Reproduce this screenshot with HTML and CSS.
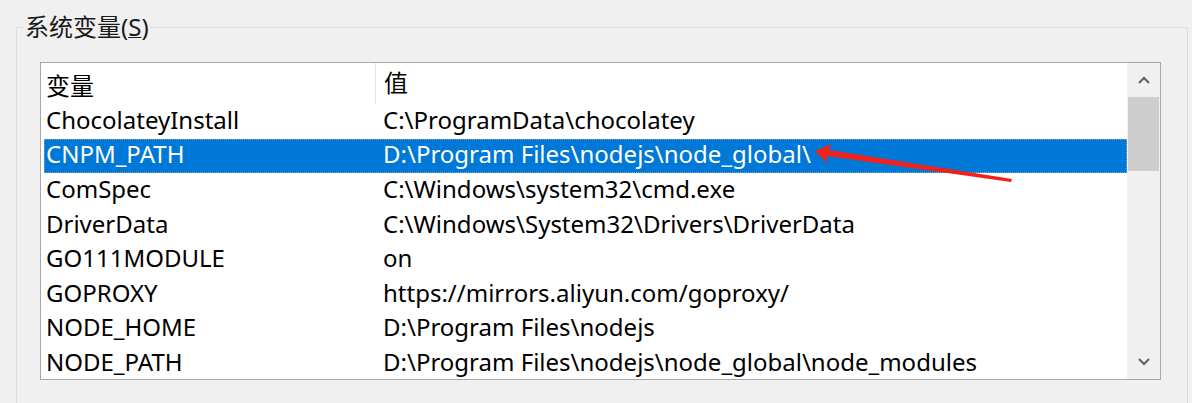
FILE: index.html
```html
<!DOCTYPE html>
<html lang="zh-CN">
<head>
    <meta charset="UTF-8">
    <title>系统变量</title>
    <link rel="stylesheet" href="styles.css">
</head>
<body>

<fieldset class="group">
    <legend>系统变量(<u>S</u>)</legend>
    <div class="listbox">
        <div class="list">
            <div class="row header">
                <div class="name">变量</div>
                <div class="value">值</div>
            </div>
            <div class="row"><div class="name">ChocolateyInstall</div><div class="value">C:\ProgramData\chocolatey</div></div>
            <div class="row selected"><div class="name">CNPM_PATH</div><div class="value">D:\Program Files\nodejs\node_global\</div></div>
            <div class="row"><div class="name">ComSpec</div><div class="value">C:\Windows\system32\cmd.exe</div></div>
            <div class="row"><div class="name">DriverData</div><div class="value">C:\Windows\System32\Drivers\DriverData</div></div>
            <div class="row"><div class="name">GO111MODULE</div><div class="value">on</div></div>
            <div class="row"><div class="name">GOPROXY</div><div class="value">https://mirrors.aliyun.com/goproxy/</div></div>
            <div class="row"><div class="name">NODE_HOME</div><div class="value">D:\Program Files\nodejs</div></div>
            <div class="row"><div class="name">NODE_PATH</div><div class="value">D:\Program Files\nodejs\node_global\node_modules</div></div>
        </div>
        <div class="scrollbar">
            <div class="arrow">
                <svg width="12" height="8" viewBox="0 0 12 8"><path d="M1 7 L6 2 L11 7" fill="none" stroke="#606060" stroke-width="2"/></svg>
            </div>
            <div class="thumb"></div>
            <div class="track"></div>
            <div class="arrow">
                <svg width="12" height="8" viewBox="0 0 12 8"><path d="M1 1 L6 6 L11 1" fill="none" stroke="#606060" stroke-width="2"/></svg>
            </div>
        </div>
    </div>
</fieldset>

<svg class="marker" width="1192" height="403" viewBox="0 0 1192 403">
    <polygon points="815,151 831,144 829,150 1012,179 1011,182 827,156 827,163" fill="#f0211a"/>
</svg>

</body>
</html>
```

FILE: styles.css
```css
body {
    margin: 0;
    background-color: #f0f0f0;
    font-family: "Noto Sans", "Noto Sans CJK SC", sans-serif;
    font-size: 24px;
    color: #000;
    height: 403px;
    overflow: hidden;
}

.group {
    box-sizing: border-box;
    margin: 14px 0 0 16px;
    width: 1172px;
    height: 389px;
    padding: 0 0 0 23px;
    border: 1px solid #dcdcdc;
    border-bottom: none;
}

.group legend {
    margin-left: -16px;
    padding: 0 1px;
    font-size: 24px;
    line-height: 26px;
    color: #1a1a1a;
}

.group legend u {
    text-decoration-thickness: 1px;
}

.listbox {
    display: flex;
    margin-top: 22px;
    width: 1119px;
    height: 316px;
    border: 1px solid #a8a8a8;
    background-color: #fff;
}

.list {
    flex: 1;
    padding-left: 3px;
    overflow: hidden;
}

.row {
    display: flex;
    height: 34.6px;
    padding-bottom: 4px;
    align-items: center;
    white-space: nowrap;
    box-sizing: border-box;
}

.row.header {
    height: 41px;
    padding: 2px 0 0;
}

.name {
    width: 331px;
    padding-left: 2px;
    box-sizing: border-box;
}

.value {
    padding-left: 8px;
}

.header .value {
    border-left: 1px solid #e5e5e5;
    height: 41px;
    line-height: 40px;
    margin-top: -2px;
}

.row.selected {
    background-color: #0078d7;
    color: #fff;
    outline: 1px dotted #8aa8c4;
    outline-offset: -1px;
}

.scrollbar {
    width: 33px;
    display: flex;
    flex-direction: column;
    background-color: #f0f0f0;
}

.arrow {
    height: 34px;
    display: flex;
    align-items: center;
    justify-content: center;
}

.thumb {
    height: 74px;
    margin: 0 1px;
    background-color: #cdcdcd;
}

.track {
    flex: 1;
}

.marker {
    position: absolute;
    top: 0;
    left: 0;
    pointer-events: none;
}
```
